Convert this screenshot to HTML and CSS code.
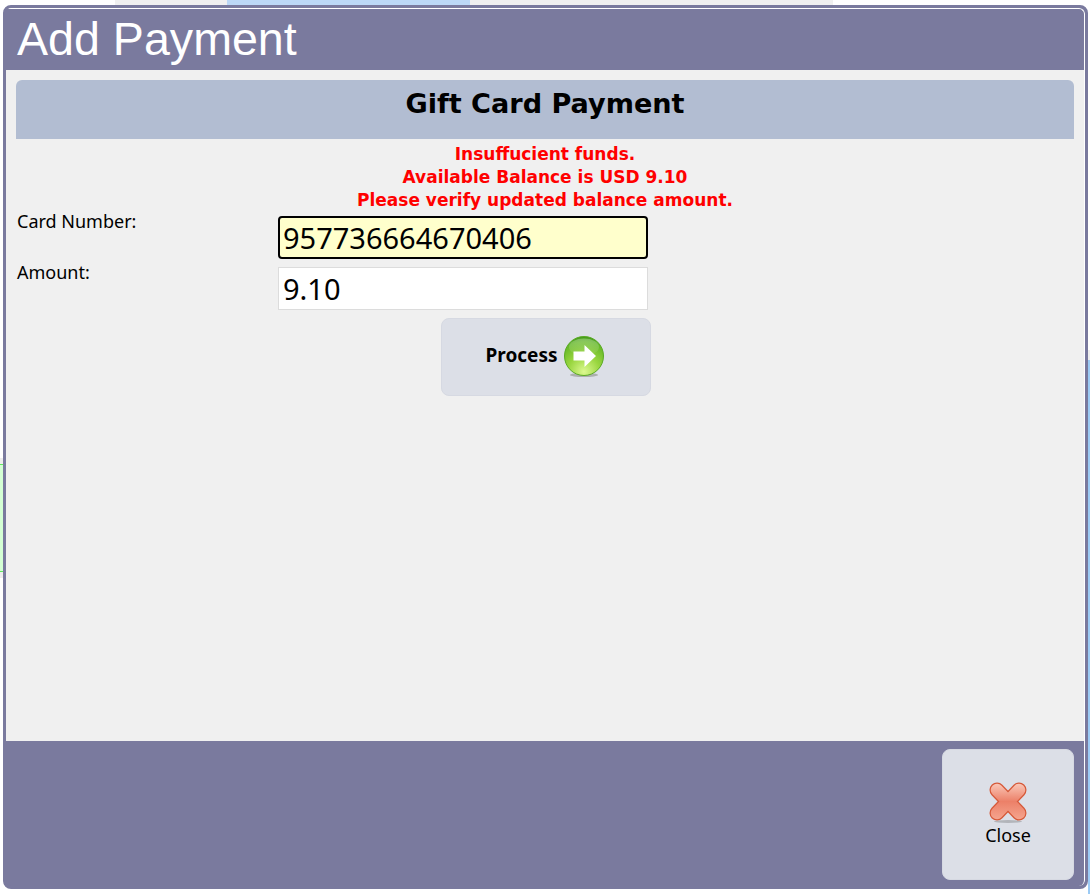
FILE: index.html
```html
<!DOCTYPE html>
<html lang="en">
<head>
  <meta charset="UTF-8" />
  <title>Add Payment</title>
  <link rel="stylesheet" href="styles.css">
</head>
<body>
  <!-- page behind the dialog, only slivers show -->
  <div class="backdrop">
    <div class="bg-tab"></div>
    <div class="bg-tab-active"></div>
    <div class="bg-tab-rest"></div>
    <div class="bg-green"></div>
    <div class="bg-blue"></div>
  </div>

  <div class="dialog">
    <div class="dialog-title">Add Payment</div>
    <div class="dialog-body">
      <h2 class="panel-head">Gift Card Payment</h2>
      <div class="error-msg">
        <div>Insuffucient funds.</div>
        <div>Available Balance is USD 9.10</div>
        <div>Please verify updated balance amount.</div>
      </div>
      <div class="form-grid">
        <label class="form-label">Card Number:</label>
        <input class="form-input focused" type="text" value="957736664670406">
        <label class="form-label">Amount:</label>
        <input class="form-input" type="text" value="9.10">
      </div>
      <div class="process-row">
        <button class="btn process-btn">
          <span>Process</span>
          <svg width="44" height="44" viewBox="0 0 44 44">
            <defs>
              <radialGradient id="ball" cx="50%" cy="90%" r="90%">
                <stop offset="0" stop-color="#dcf990"/>
                <stop offset="0.45" stop-color="#9ad640"/>
                <stop offset="0.85" stop-color="#66b828"/>
                <stop offset="1" stop-color="#3f961a"/>
              </radialGradient>
              <linearGradient id="shine" x1="0" y1="0" x2="0" y2="1">
                <stop offset="0" stop-color="#fff" stop-opacity="0.28"/>
                <stop offset="1" stop-color="#fff" stop-opacity="0.04"/>
              </linearGradient>
            </defs>
            <ellipse cx="22" cy="39" rx="14" ry="2" fill="#8a8f85" opacity="0.6"/>
            <circle cx="22" cy="20" r="19.500" fill="url(#ball)" stroke="#5aab24" stroke-width="1"/>
            <ellipse cx="22" cy="11" rx="15" ry="8.500" fill="url(#shine)"/>
            <path d="M11.500 15.500h11V9L34 20 22.500 31v-6.500h-11z" fill="#fff"/>
          </svg>
        </button>
      </div>
    </div>
    <div class="dialog-foot">
      <button class="btn close-btn">
        <svg width="42" height="42" viewBox="0 0 42 42">
          <defs>
            <linearGradient id="cross" gradientUnits="userSpaceOnUse" x1="0" y1="0" x2="0" y2="39">
              <stop offset="0" stop-color="#fbcdbe"/>
              <stop offset="0.5" stop-color="#ec8068"/>
              <stop offset="1" stop-color="#f6a892"/>
            </linearGradient>
          </defs>
          <ellipse cx="21" cy="39.500" rx="14" ry="1.500" fill="#8f9296" opacity="0.55"/>
          <g stroke-linecap="round" stroke="#d65a3a" stroke-width="15">
            <line x1="10" y1="8" x2="32" y2="31"/>
            <line x1="32" y1="8" x2="10" y2="31"/>
          </g>
          <g stroke-linecap="round" stroke="url(#cross)" stroke-width="12.500">
            <line x1="10" y1="8" x2="32" y2="31"/>
            <line x1="32" y1="8" x2="10" y2="31"/>
          </g>
        </svg>
        <span>Close</span>
      </button>
    </div>
  </div>
</body>
</html>
```

FILE: styles.css
```css
:root {
  --frame: #7a7a9e;
  --body: #f0f0f0;
  --panel: #b2bdd2;
  --btn: #dcdfe7;
}
html, body { margin: 0; padding: 0; height: 100%; }
body {
  background: #fff;
  font-family: "Noto Sans", "DejaVu Sans", sans-serif;
  overflow: hidden;
  position: relative;
}

/* background slivers */
.backdrop { position: absolute; inset: 0; }
.backdrop div { position: absolute; }
.bg-tab { left: 115px; top: 0; width: 112px; height: 5px; background: #f0f0f0; }
.bg-tab-active { left: 227px; top: 0; width: 243px; height: 5px; background: #bcd8f6; }
.bg-tab-rest { left: 470px; top: 0; width: 363px; height: 5px; background: #f0f0f0; }
.bg-green {
  left: 0; top: 464px; width: 3px; height: 108px;
  background: #d4ffd4;
  border-top: 1px solid #5fe85f;
  border-bottom: 1px solid #5fe85f;
  box-sizing: border-box;
  box-shadow: 0 -6px 0 #eee, 0 6px 0 #eee;
}
.bg-blue { right: 0; top: 360px; width: 2px; height: 534px; background: #9ccbf5; box-shadow: 0 -10px 0 #eee; }

.dialog {
  position: absolute;
  left: 3px; top: 5px;
  width: 1085px; height: 884px;
  box-sizing: border-box;
  background: var(--frame);
  border: 3px solid var(--frame);
  border-radius: 8px;
  display: flex;
  flex-direction: column;
  overflow: hidden;
}
.dialog-title {
  height: 62px;
  border-top: 1px solid #fff;
  border-right: 1px solid #fff;
  border-top-right-radius: 6px;
  color: #fff;
  font-family: "Liberation Sans", Arial, sans-serif;
  font-size: 46.6px;
  line-height: 60px;
  padding-left: 11px;
  flex: none;
  box-sizing: border-box;
}
.dialog-body {
  flex: 1;
  background: var(--body);
  border-right: 1px solid #fff;
  padding: 10px 10px 0;
}
.panel-head {
  margin: 0;
  height: 59px;
  background: var(--panel);
  border-radius: 6px 6px 0 0;
  text-align: center;
  font-family: "DejaVu Sans", sans-serif;
  font-size: 27.1px;
  line-height: 47px;
  font-weight: 700;
  color: #000;
}
.error-msg {
  margin-top: 4px;
  color: #f00;
  text-align: center;
  font-family: "DejaVu Sans", sans-serif;
  font-size: 17px;
  font-weight: 700;
  line-height: 23px;
}
.form-grid {
  display: grid;
  grid-template-columns: 261px 370px;
  row-gap: 8px;
  margin-top: 4px;
  margin-left: 1px;
}
.form-label { font-size: 18px; line-height: 23px; margin-top: -6px; color: #000; }
.form-input {
  height: 43px;
  box-sizing: border-box;
  width: 370px;
  background: #fff;
  border: 1px solid #dcdcdc;
  padding: 0 4px;
  font-family: "Noto Sans", sans-serif;
  font-size: 29px;
  color: #000;
  outline: none;
}
.form-input.focused {
  background: #ffc;
  border: 2px solid #000;
  border-radius: 4px;
  padding: 0 3px;
}
.process-row { display: flex; justify-content: center; margin-top: 8px; padding-left: 1px; }
.btn {
  background: var(--btn);
  border: 1px solid #d6d9e2;
  border-radius: 8px;
  color: #000;
  font-family: "Noto Sans", sans-serif;
  padding: 0;
}
.process-btn {
  width: 210px; height: 78px;
  display: flex; align-items: center; justify-content: center; gap: 4px;
  padding-bottom: 4px;
  font-size: 19px; font-weight: 700;
}
.process-btn svg { margin-top: 5px; }
.dialog-foot {
  height: 145px;
  flex: none;
  border-right: 1px solid #fff;
  border-bottom-right-radius: 6px;
  display: flex;
  justify-content: flex-end;
  padding: 8px 10px 0 0;
  box-sizing: border-box;
}
.close-btn {
  width: 132px; height: 131px;
  display: flex; flex-direction: column; align-items: center; justify-content: flex-start;
  padding-top: 32px;
  font-size: 18px;
  box-sizing: border-box;
}
.close-btn span { line-height: 23px; }
```
